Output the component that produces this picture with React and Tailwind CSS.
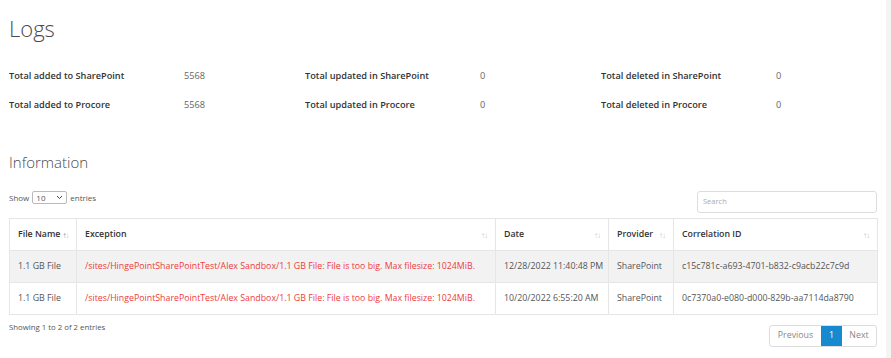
const stats = [
  [
    ["Total added to SharePoint", "5568"],
    ["Total updated in SharePoint", "0"],
    ["Total deleted in SharePoint", "0"],
  ],
  [
    ["Total added to Procore", "5568"],
    ["Total updated in Procore", "0"],
    ["Total deleted in Procore", "0"],
  ],
];

const rows = [
  {
    file: "1.1 GB File",
    exception:
      "/sites/HingePointSharePointTest/Alex Sandbox/1.1 GB File: File is too big. Max filesize: 1024MiB.",
    date: "12/28/2022 11:40:48 PM",
    provider: "SharePoint",
    id: "c15c781c-a693-4701-b832-c9acb22c7c9d",
  },
  {
    file: "1.1 GB File",
    exception:
      "/sites/HingePointSharePointTest/Alex Sandbox/1.1 GB File: File is too big. Max filesize: 1024MiB.",
    date: "10/20/2022 6:55:20 AM",
    provider: "SharePoint",
    id: "0c7370a0-e080-d000-829b-aa7114da8790",
  },
];

const SortIcon = ({ active }) => (
  <span className="text-[8px] tracking-[-1px] text-[#c8c8c8] leading-none">
    <span className={active ? "text-[#888]" : ""}>↑</span>↓
  </span>
);

const Th = ({ children, width, tight, active, last }) => (
  <th
    className={`h-[32px] px-[8px] text-left font-semibold text-[8.8px] text-[#333] whitespace-nowrap border-b border-[#e6e6e6] ${last ? "" : "border-r"}`}
    style={{ width }}
  >
    <div className={`flex items-center ${tight ? "gap-[2px]" : "justify-between"}`}>
      <span>{children}</span>
      <SortIcon active={active} />
    </div>
  </th>
);

export default function App() {
  return (
    <div className="flex w-[891px] h-[358px] bg-white font-['Open_Sans',sans-serif] overflow-hidden">
      <div className="w-[886px] shrink-0 pl-[9px] pr-[9px]">
        <h1 className="mt-[13px] text-[22px] font-light text-[#4a4a4a] leading-[30px]">Logs</h1>

        <div className="mt-[26px] flex flex-col gap-[15px]">
          {stats.map((row, i) => (
            <div key={i} className="flex h-[14px] items-center">
              {row.map(([label, value], j) => (
                <div key={label} className={`flex text-[9.2px] ${j < 2 ? "w-[296px]" : "flex-1"}`}>
                  <span className="w-[175px] font-semibold text-[#333]">{label}</span>
                  <span className="text-[#666]">{value}</span>
                </div>
              ))}
            </div>
          ))}
        </div>

        <h2 className="mt-[40px] text-[15px] font-light text-[#4a4a4a] leading-[20px]">Information</h2>

        <div className="mt-[19px] flex items-end justify-between">
          <div className="flex items-center gap-[3px] text-[8px] text-[#555] mb-[9px]">
            <span>Show</span>
            <div className="flex h-[13px] w-[35px] items-center justify-between rounded-[2px] border border-[#bbb] px-[3px]">
              <span>10</span>
              <svg width="7" height="5" viewBox="0 0 7 5">
                <path d="M1 1l2.5 2.5L6 1" stroke="#444" strokeWidth="1" fill="none" />
              </svg>
            </div>
            <span>entries</span>
          </div>
          <div className="flex h-[22px] w-[180px] items-center rounded-[3px] border border-[#ddd] px-[5px] text-[7.5px] text-[#aaa]">
            Search
          </div>
        </div>

        <table className="mt-[5px] w-[868px] table-fixed border border-[#e6e6e6] border-collapse">
          <thead>
            <tr>
              <Th width="67px" tight active>File Name</Th>
              <Th width="419px">Exception</Th>
              <Th width="113px">Date</Th>
              <Th width="65px">Provider</Th>
              <Th width="204px" last>Correlation ID</Th>
            </tr>
          </thead>
          <tbody className="text-[8.8px] text-[#555]">
            {rows.map((r, i) => (
              <tr key={i} className={`h-[32px] ${i === 0 ? "bg-[#f2f2f2]" : "bg-white"}`}>
                <td className="px-[8px] border-r border-b border-[#e6e6e6] whitespace-nowrap">{r.file}</td>
                <td className="px-[8px] border-r border-b border-[#e6e6e6] text-[#ee3b3b] whitespace-nowrap">{r.exception}</td>
                <td className="px-[8px] border-r border-b border-[#e6e6e6] whitespace-nowrap">{r.date}</td>
                <td className="px-[8px] border-r border-b border-[#e6e6e6] whitespace-nowrap">{r.provider}</td>
                <td className="px-[8px] border-b border-[#e6e6e6] whitespace-nowrap">{r.id}</td>
              </tr>
            ))}
          </tbody>
        </table>

        <div className="mt-[6px] flex items-start justify-between">
          <span className="mt-[1px] text-[7.8px] text-[#555]">Showing 1 to 2 of 2 entries</span>
          <div className="mt-[4px] flex h-[22px] items-stretch rounded-[3px] border border-[#ddd] text-[8.8px] text-[#888] overflow-hidden">
            <span className="flex w-[51px] items-center justify-center">Previous</span>
            <span className="flex w-[21px] items-center justify-center bg-[#1689cf] text-white">1</span>
            <span className="flex w-[34px] items-center justify-center">Next</span>
          </div>
        </div>
      </div>
      <div className="w-[5px] bg-[#f4f4f4]" />
    </div>
  );
}
